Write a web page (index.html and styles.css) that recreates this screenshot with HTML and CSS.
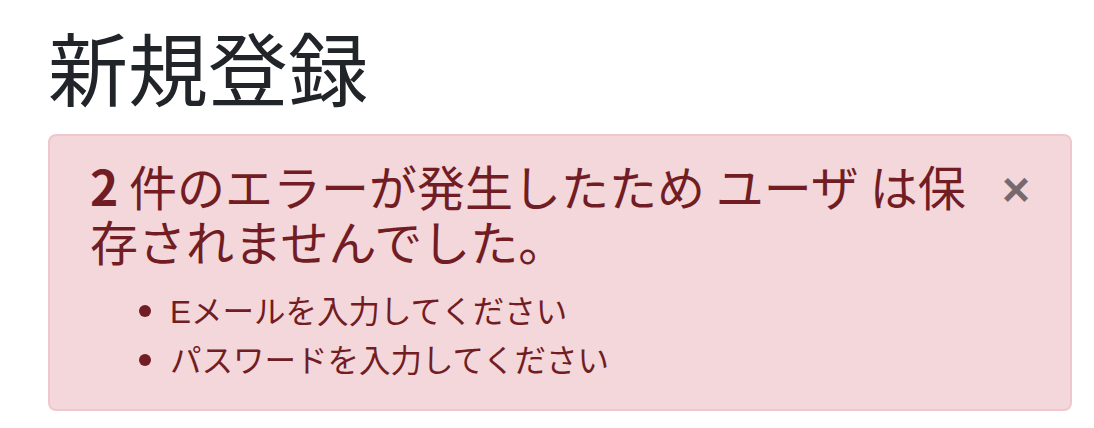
FILE: index.html
```html
<!DOCTYPE html>
<html lang="ja">
<head>
<meta charset="utf-8">
<title>新規登録</title>
<link rel="stylesheet" href="styles.css">
</head>
<body>
<main class="page">
  <h1 class="page-title">新規登録</h1>
  <div class="alert">
    <button class="close" type="button" aria-label="Close">×</button>
    <h4 class="alert-heading"><b class="num">2</b> 件のエラーが発生したため ユーザ は保存されませんでした。</h4>
    <ul class="errors">
      <li><span class="latin">E</span>メールを入力してください</li>
      <li>パスワードを入力してください</li>
    </ul>
  </div>
</main>
</body>
</html>
```

FILE: styles.css
```css
html, body {
  margin: 0;
  padding: 0;
  background: #fff;
}
body {
  font-family: "Noto Sans CJK JP", "Noto Sans", sans-serif;
  color: #212529;
}
.page {
  padding: 17px 22px 0 48px;
}
.page-title {
  margin: 0 0 21px 0;
  font-size: 80px;
  font-weight: 400;
  line-height: 1.2;
  color: #212529;
}
.alert {
  width: 1024px;
  box-sizing: border-box;
  padding: 22px 40px 28px 40px;
  border: 2px solid #f0c7cc;
  border-radius: 8px;
  background: #f3d7da;
  color: #721c24;
}
.close {
  float: right;
  margin: 8px 0 0 0;
  padding: 0;
  border: 0;
  background: transparent;
  font-family: "Liberation Sans", Arial, sans-serif;
  font-size: 48px;
  font-weight: 700;
  line-height: 1;
  color: #000;
  opacity: .5;
}
.alert-heading {
  margin: 0 0 18px 0;
  font-size: 48px;
  font-weight: 400;
  line-height: 55px;
  color: #721c24;
}
.num {
  font-weight: 700;
}
.latin {
  font-family: "Liberation Sans", Arial, sans-serif;
}
.errors {
  margin: 0;
  padding-left: 80px;
  font-size: 31.5px;
  line-height: 46px;
}
```
